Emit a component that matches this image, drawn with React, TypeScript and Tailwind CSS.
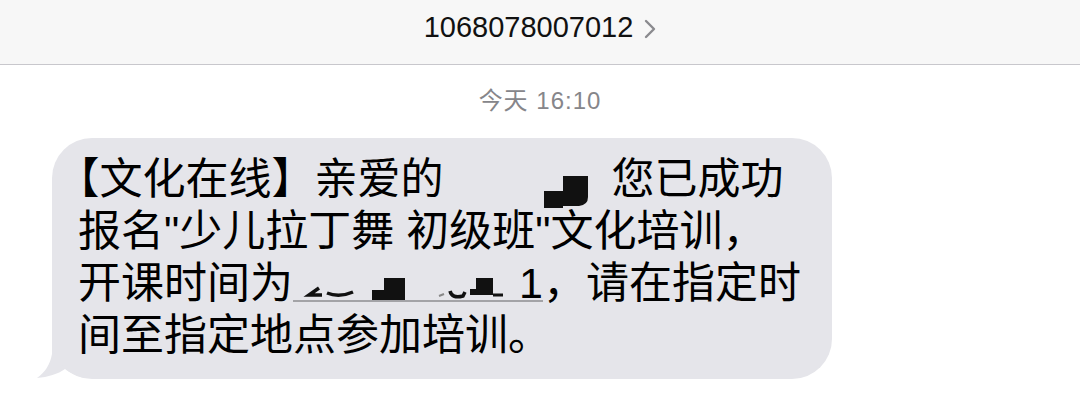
import React from "react";

const FONT = "[font-family:'Liberation_Sans','Noto_Sans_CJK_SC',sans-serif]";

// 被打码的姓名
function NameMask() {
  return (
    <svg width="168" height="52" viewBox="0 0 168 52" className="inline-block align-top overflow-visible">
      <path d="M100 38 H119 V23 H144 V44 Q144 52 135 53 H119 V55 H100 Z" fill="#111" />
    </svg>
  );
}

// 被打码的日期
function DateMask() {
  return (
    <svg width="226" height="43" viewBox="0 0 226 43" className="block overflow-visible">
      <path d="M26 31 L16 38 H29" stroke="#111" strokeWidth="3.5" fill="none" />
      <path d="M34 36 Q46 41 60 35" stroke="#111" strokeWidth="3.5" fill="none" />
      <path d="M79 33 H91 V21 H112 V43 H79 Z" fill="#111" />
      <path d="M146 39 L151 37" stroke="#888" strokeWidth="2" />
      <path d="M157 34 Q159 42 170 39 L172 35" stroke="#111" strokeWidth="3.5" fill="none" />
      <path d="M177 32 H183 V21 H200 V38 H177 Z" fill="#111" />
      <path d="M200 38 H210" stroke="#111" strokeWidth="3" />
    </svg>
  );
}

export default function App() {
  return (
    <div className={`w-[1080px] h-[405px] bg-white overflow-hidden ${FONT}`}>
      {/* 顶部栏 */}
      <div className="h-[65px] bg-[#f7f7f7] border-b border-[#c8c7cc] flex items-center justify-center pb-[8px]">
        <span className="text-[29px] text-[#111]">1068078007012</span>
        <svg width="12" height="20" viewBox="0 0 12 20" className="ml-[11px] mt-[2px]">
          <path d="M2 2 L10 10 L2 18" stroke="#8a8a8e" strokeWidth="2.4" fill="none" strokeLinecap="round" strokeLinejoin="round" />
        </svg>
      </div>

      {/* 时间 */}
      <div className="h-[73px] flex items-center justify-center pb-[2px] text-[24px] text-[#86868a] tracking-[1px]">
        今天 16:10
      </div>

      {/* 短信气泡 */}
      <div className="relative ml-[52px] w-[780px]">
        <svg width="70" height="50" viewBox="30 330 70 50" className="absolute left-[-22px] bottom-0">
          <path d="M52 330 L52 355 C50 366 45 373 37 379 C48 378 58 375 65 370 C70 374 76 377 85 379 L100 379 L100 330 Z" fill="#e5e5ea" />
        </svg>
        <div className="relative bg-[#e5e5ea] rounded-[40px] pt-[15px] pb-[18px] pl-[26px] text-[43px] leading-[52px] text-black whitespace-nowrap">
          <div>
            <span className="[font-feature-settings:'halt']">【</span>文化在线】亲爱的<NameMask />您已成功
          </div>
          <div>报名"少儿拉丁舞 初级班"文化培训，</div>
          <div>
            开课时间为<span className="inline-flex h-[45px] align-top border-b-2 border-[#a3a3a7]"><DateMask /><span className="leading-[52px]">1</span></span>，请在指定时
          </div>
          <div>间至指定地点参加培训。</div>
        </div>
      </div>
    </div>
  );
}
